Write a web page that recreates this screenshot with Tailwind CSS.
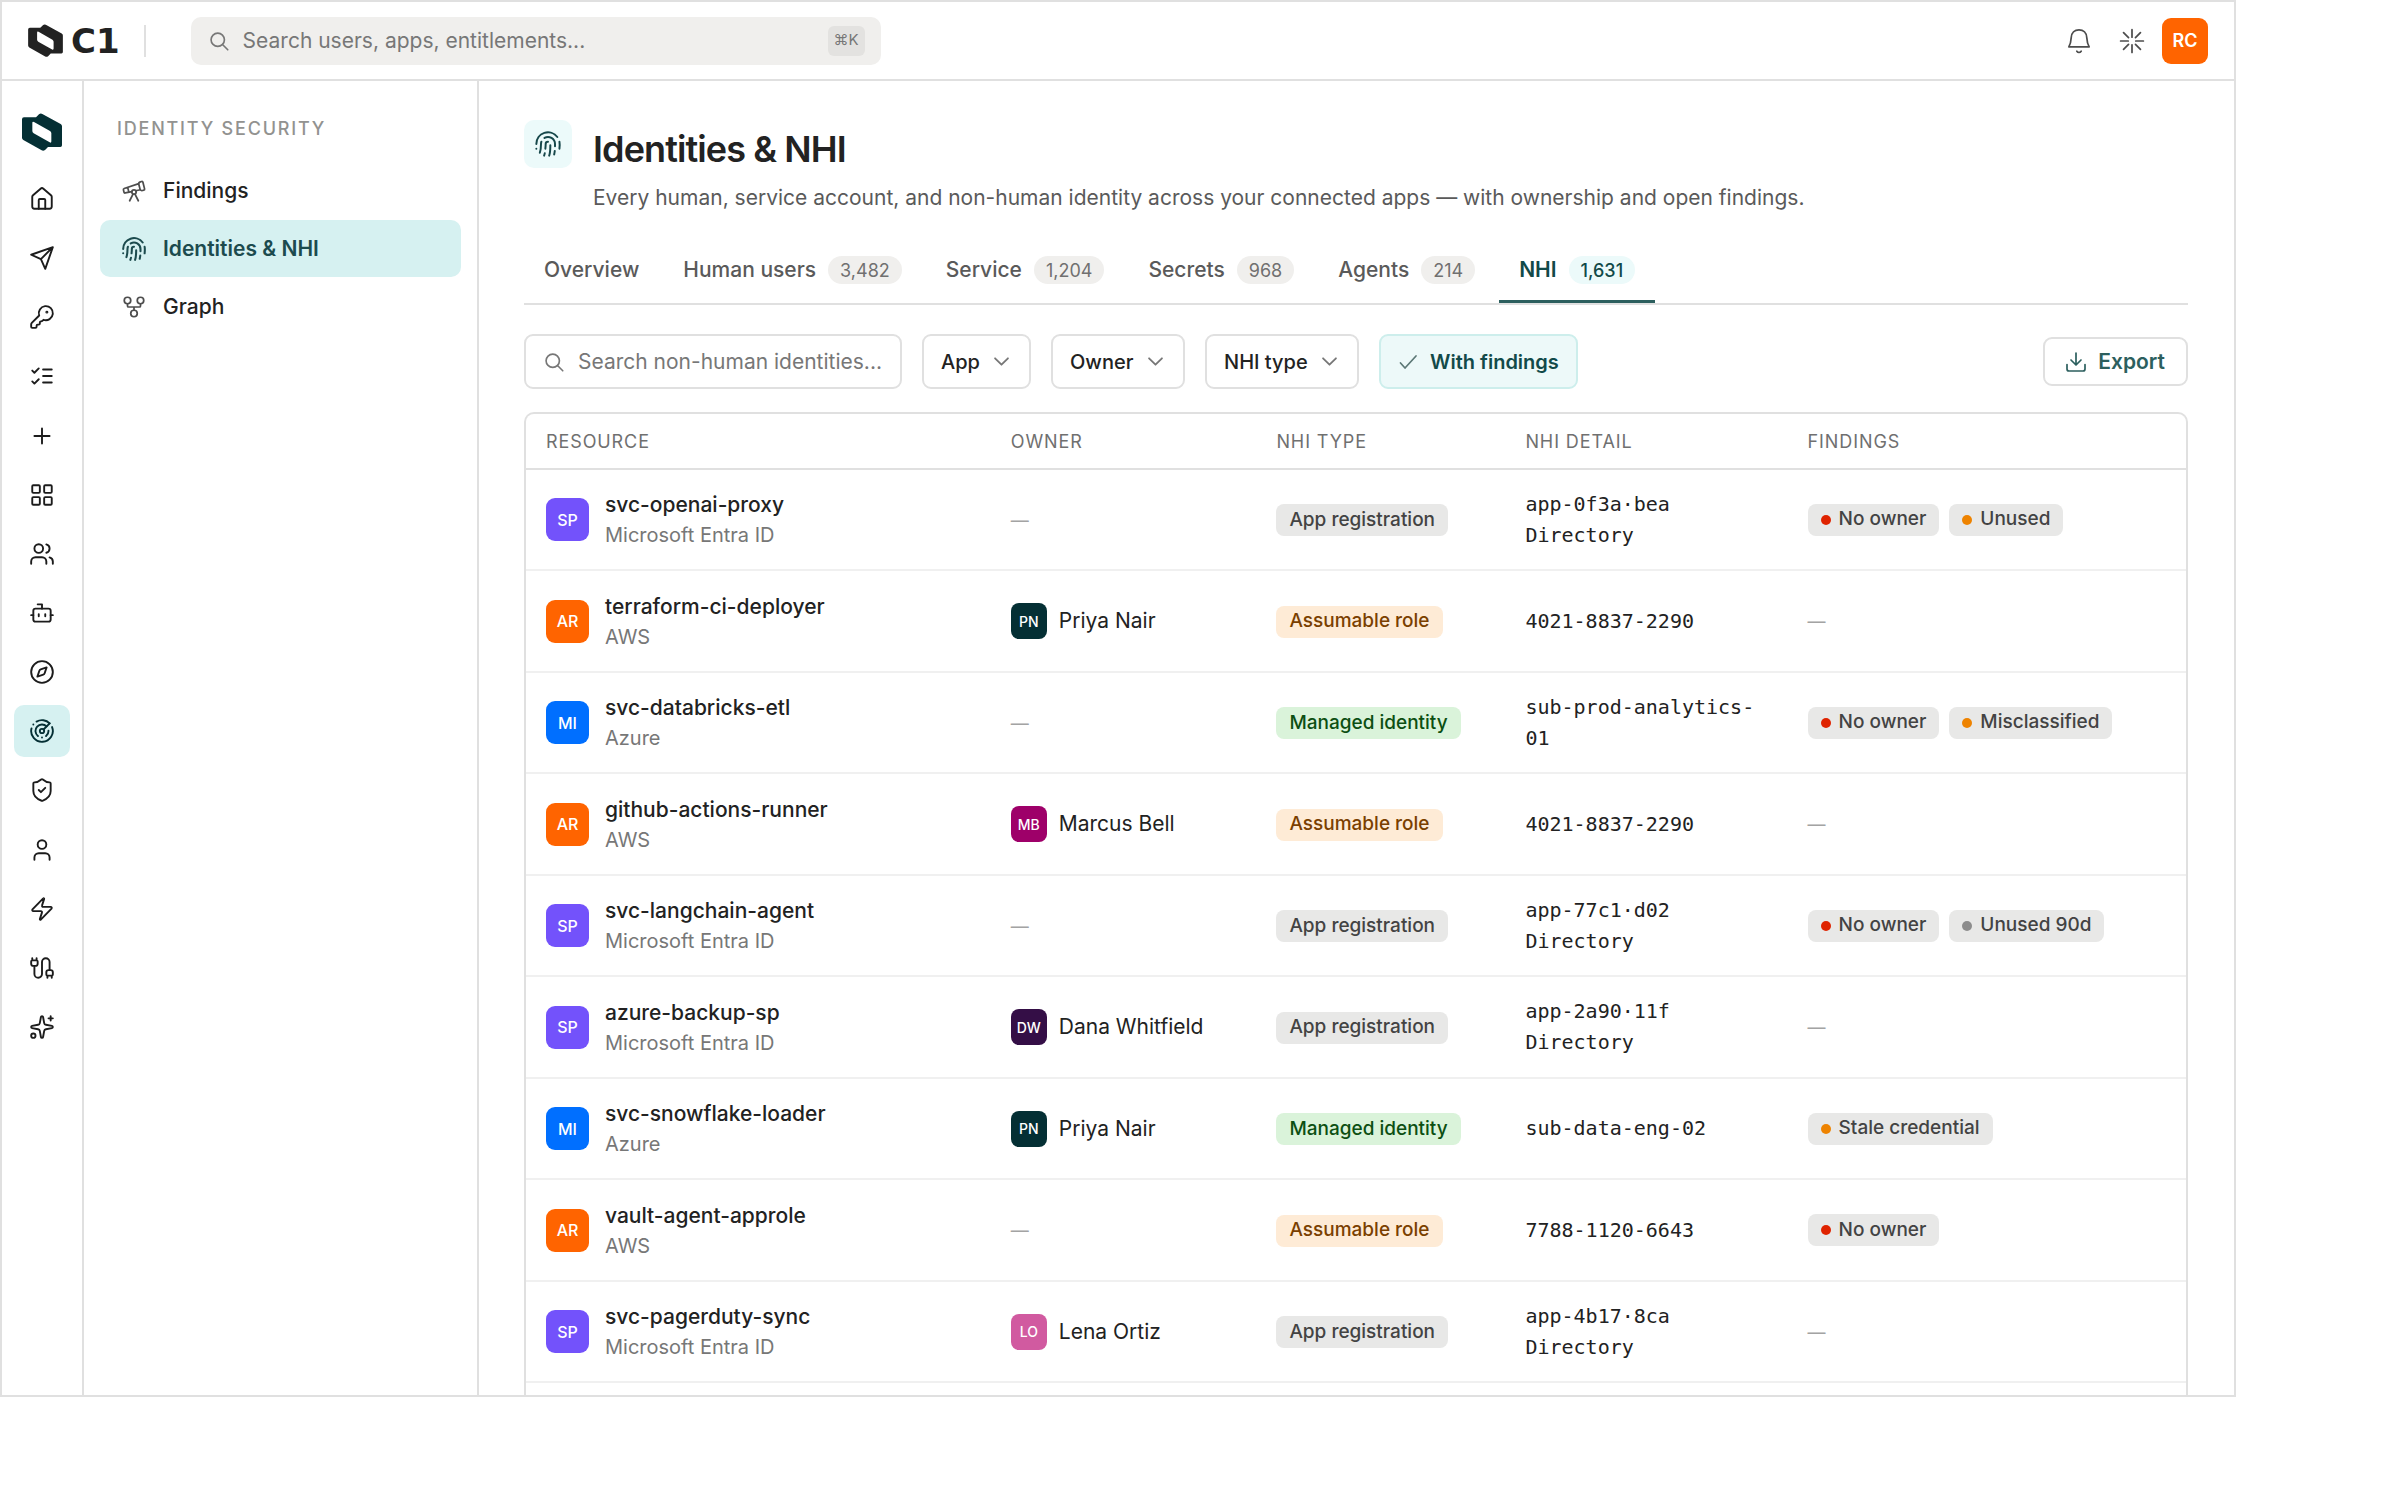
<!DOCTYPE html>
<html lang="en">
  <head>
    <meta charset="UTF-8" />
    <meta name="viewport" content="width=device-width, initial-scale=1.0" />
    <title>Identities &amp; NHI</title>
    <script src="https://cdn.jsdelivr.net/npm/@tailwindcss/browser@4"></script>
  </head>
  <body class="h-screen bg-white pr-[164px] pb-[115px] font-['Inter',sans-serif] text-[21px] text-[#222222]">

    <!-- shared shapes -->
    <svg class="hidden">
      <symbol id="mark" viewBox="0 0 120 114">
        <path fill="currentColor" fill-rule="evenodd" d="M0 19Q0 13 6 13H42L51 4Q56 0 61 3L116 33Q120 35 120 40V97Q120 102 115 102H78L69 111Q64 115 59 112L4 81Q0 78 0 74ZM31 30Q31 24 36 27L84 54Q88 57 88 61V85Q88 91 83 88L35 61Q31 58 31 54Z" />
      </symbol>
      <symbol id="fingerprint" viewBox="0 0 24 24">
        <path d="M12 10a2 2 0 0 0-2 2c0 1.02-.1 2.51-.26 4M14 13.12c0 2.38 0 6.38-1 8.88M17.29 21.02c.12-.6.43-2.3.5-3.02M2 12a10 10 0 0 1 18-6M2 16h.01M21.8 16c.2-2 .131-5.354 0-6M5 19.5C5.5 18 6 15 6 12a6 6 0 0 1 .34-2M8.65 22c.21-.66.45-1.32.57-2M9 6.8a6 6 0 0 1 9 5.2v2" />
      </symbol>
      <symbol id="search" viewBox="0 0 24 24">
        <circle cx="10.5" cy="10.5" r="8" /><path d="m16.5 16.5 6 6" />
      </symbol>
      <symbol id="chevron" viewBox="0 0 14 14">
        <path d="m1 4 6 6 6-6" />
      </symbol>
    </svg>

    <div class="flex h-full flex-col overflow-hidden border-2 border-[#e0e0e0]">

      <!-- TOP BAR -->
      <header class="flex h-[79px] shrink-0 items-center border-b-2 border-[#e0e0e0] pr-[26px] pl-[26px]">
        <a href="#" aria-label="C1 home" class="flex items-center gap-2 text-[#222222]">
          <svg class="h-[33px] w-[35px]"><use href="#mark" /></svg>
          <span class="font-['DejaVu_Sans',sans-serif] text-[34px] leading-[34px] font-bold">C1</span>
        </a>
        <span class="ml-6 h-8 w-0.5 bg-[#e0e0e0]"></span>
        <label class="ml-[45px] flex h-12 w-[690px] items-center rounded-[10px] bg-[#f0efed] pr-4 pl-[18px]">
          <svg class="size-5 shrink-0 text-[#777777]" fill="none" stroke="currentColor" stroke-width="2" stroke-linecap="round"><use href="#search" /></svg>
          <input type="text" aria-label="Search" placeholder="Search users, apps, entitlements..." class="ml-[14px] min-w-0 flex-1 outline-none placeholder:text-[#777777]" />
          <kbd class="flex h-[30px] items-center rounded-md bg-[#e3e2e0] px-[6px] font-['Inter',sans-serif] text-[15px] text-[#777777]">⌘K</kbd>
        </label>
        <div class="ml-auto flex items-center">
          <button aria-label="Notifications" class="flex size-[53px] items-center justify-center text-[#4d4d4d]">
            <svg class="size-[26px]" viewBox="0 0 24 24" fill="none" stroke="currentColor" stroke-width="1.6" stroke-linecap="round" stroke-linejoin="round">
              <path d="M2.6 17.4h18.8c-1.6-2.6-2-4.6-2.2-8.4C19 4.4 16 1.8 12 1.8S5 4.4 4.8 9c-.2 3.8-.6 5.8-2.2 8.4ZM10 21.4c.6.9 1.3 1.2 2 1.2s1.400-.3 2-1.2" />
            </svg>
          </button>
          <button aria-label="Assistant" class="flex size-[53px] items-center justify-center text-[#4d4d4d]">
            <svg class="size-[26px]" viewBox="0 0 24 24" fill="none" stroke="currentColor" stroke-width="1.6" stroke-linecap="round">
              <path d="M12 1.5v7M12 15.5v7M1.5 12h7M15.5 12h7M4.2 4.2l4.6 4.6M15.2 15.2l4.6 4.6M4.2 19.8l4.6-4.6M15.2 8.8l4.6-4.6" />
            </svg>
          </button>
          <button aria-label="Account" class="ml-1 flex size-[46px] items-center justify-center rounded-[9px] bg-[#ff6400] text-[18px] font-semibold text-white">RC</button>
        </div>
      </header>

      <div class="flex min-h-0 flex-1">

        <!-- ICON RAIL -->
        <nav aria-label="Main" class="flex w-[82px] shrink-0 flex-col items-center border-r-2 border-[#e0e0e0] pt-8 text-[#1c1c1c]">
          <svg class="h-[38px] w-10 shrink-0 text-[#042f34]"><use href="#mark" /></svg>
          <div id="rail" class="mt-[22px] flex h-[880px] shrink-0 flex-col justify-between"></div>
        </nav>

        <!-- SECTION MENU -->
        <nav aria-label="Identity security" class="w-[395px] shrink-0 border-r-2 border-[#e0e0e0] pt-[33px] pr-4 pl-4">
          <h2 class="pl-[17px] text-[18px] leading-[30px] font-medium tracking-widest text-[#929290] uppercase">Identity Security</h2>
          <div class="mt-[18px] flex flex-col gap-px font-medium">
            <a href="#" class="flex h-[57px] items-center gap-4 rounded-[10px] px-[21px]">
              <svg class="size-[26px] text-[#4d4d4d]" viewBox="0 0 24 24" fill="none" stroke="currentColor" stroke-width="1.6" stroke-linecap="round" stroke-linejoin="round">
                <path d="m10.065 12.493-6.18 1.318a.934.934 0 0 1-1.108-.702l-.537-2.15a1.07 1.07 0 0 1 .691-1.265l13.504-4.44M13.56 11.747l4.332-.924M16 21l-3.105-6.21M16.485 5.94a2 2 0 0 1 1.455-2.425l1.09-.272a1 1 0 0 1 1.212.727l1.515 6.06a1 1 0 0 1-.727 1.213l-1.09.272a2 2 0 0 1-2.425-1.455zM6.158 8.633l1.114 4.456M8 21l3.105-6.21" />
                <circle cx="12" cy="13" r="2" />
              </svg>
              Findings
            </a>
            <a href="#" aria-current="page" class="flex h-[57px] items-center gap-4 rounded-[10px] bg-[#d6f1f1] px-[21px] font-semibold text-[#1c4b4e]">
              <svg class="size-[26px]" fill="none" stroke="currentColor" stroke-width="1.9" stroke-linecap="round" stroke-linejoin="round"><use href="#fingerprint" /></svg>
              Identities &amp; NHI
            </a>
            <a href="#" class="flex h-[57px] items-center gap-4 rounded-[10px] px-[21px]">
              <svg class="size-[26px] text-[#4d4d4d]" viewBox="0 0 24 24" fill="none" stroke="currentColor" stroke-width="1.6" stroke-linecap="round" stroke-linejoin="round">
                <circle cx="12" cy="18" r="3" /><circle cx="6" cy="6" r="3" /><circle cx="18" cy="6" r="3" />
                <path d="M18 9v2c0 .6-.4 1-1 1H7c-.6 0-1-.4-1-1V9M12 12v3" />
              </svg>
              Graph
            </a>
          </div>
        </nav>

        <!-- CONTENT -->
        <main class="flex min-w-0 flex-1 flex-col overflow-hidden pt-[39px] pr-[46px] pl-[45px]">
          <div class="flex gap-[21px]">
            <span class="flex size-12 shrink-0 items-center justify-center rounded-[10px] bg-[#ecfafa] text-[#16474a]">
              <svg class="size-7" fill="none" stroke="currentColor" stroke-width="1.7" stroke-linecap="round" stroke-linejoin="round"><use href="#fingerprint" /></svg>
            </span>
            <div>
              <h1 class="text-[36px] leading-[58px] font-semibold tracking-tight">Identities &amp; NHI</h1>
              <p class="leading-[40px] text-[#5a5a5a]">Every human, service account, and non-human identity across your connected apps — with ownership and open findings.</p>
            </div>
          </div>

          <!-- tabs -->
          <div id="tabs" role="tablist" class="mt-[19px] flex h-[68px] shrink-0 gap-1 border-b-2 border-[#e0e0e0]"></div>

          <!-- filters -->
          <div class="mt-[29px] flex shrink-0 items-center gap-5">
            <label class="flex h-[55px] w-[378px] items-center rounded-[9px] border-2 border-[#e0e0e0] pr-2 pl-[18px]">
              <svg class="size-5 shrink-0 text-[#777777]" fill="none" stroke="currentColor" stroke-width="2" stroke-linecap="round"><use href="#search" /></svg>
              <input type="text" aria-label="Search non-human identities" placeholder="Search non-human identities..." class="ml-[14px] min-w-0 flex-1 outline-none placeholder:text-[#777777]" />
            </label>
            <div class="relative">
              <select aria-label="App" class="block h-[55px] appearance-none rounded-[9px] border-2 border-[#e0e0e0] pr-[49px] pl-[17px] text-[20px] font-medium"><option>App</option></select>
              <svg class="pointer-events-none absolute top-5 right-[22px] size-[15px] text-[#777777]" fill="none" stroke="currentColor" stroke-width="1.7" stroke-linecap="round" stroke-linejoin="round"><use href="#chevron" /></svg>
            </div>
            <div class="relative">
              <select aria-label="Owner" class="block h-[55px] appearance-none rounded-[9px] border-2 border-[#e0e0e0] pr-[49px] pl-[17px] text-[20px] font-medium"><option>Owner</option></select>
              <svg class="pointer-events-none absolute top-5 right-[22px] size-[15px] text-[#777777]" fill="none" stroke="currentColor" stroke-width="1.7" stroke-linecap="round" stroke-linejoin="round"><use href="#chevron" /></svg>
            </div>
            <div class="relative">
              <select aria-label="NHI type" class="block h-[55px] appearance-none rounded-[9px] border-2 border-[#e0e0e0] pr-[49px] pl-[17px] text-[20px] font-medium"><option>NHI type</option></select>
              <svg class="pointer-events-none absolute top-5 right-[22px] size-[15px] text-[#777777]" fill="none" stroke="currentColor" stroke-width="1.7" stroke-linecap="round" stroke-linejoin="round"><use href="#chevron" /></svg>
            </div>
            <button aria-pressed="true" class="flex h-[55px] items-center gap-3 rounded-[9px] border-2 border-[#cdeeec] bg-[#edf9f9] px-[17px] text-[20px] font-semibold text-[#124a49]">
              <svg class="size-5 text-[#5c7876]" viewBox="0 0 20 20" fill="none" stroke="currentColor" stroke-width="1.7" stroke-linecap="round" stroke-linejoin="round"><path d="m2.5 11 4.5 5L18 4" /></svg>
              With findings
            </button>
            <button class="ml-auto flex h-[49px] items-center gap-3 rounded-[9px] border-2 border-[#e0e0e0] px-[21px] font-semibold text-[#2c5f5e]">
              <svg class="size-5" viewBox="0 0 20 20" fill="none" stroke="currentColor" stroke-width="1.7" stroke-linecap="round" stroke-linejoin="round"><path d="M10 1v11.5M5 8l5 5 5-5M1 12.5V17a2 2 0 0 0 2 2h14a2 2 0 0 0 2-2v-4.5" /></svg>
              Export
            </button>
          </div>

          <!-- table -->
          <div class="mt-[23px] flex-1 rounded-t-[10px] border-2 border-b-0 border-[#e0e0e0]">
            <table class="w-full table-fixed border-separate border-spacing-0 text-left">
              <thead class="text-[18px] tracking-wider text-[#707070] uppercase">
                <tr class="h-14">
                  <th class="w-[28%] border-b-2 border-[#e0e0e0] px-5 font-normal">Resource</th>
                  <th class="w-[16%] border-b-2 border-[#e0e0e0] px-5 font-normal">Owner</th>
                  <th class="w-[15%] border-b-2 border-[#e0e0e0] px-5 font-normal">NHI type</th>
                  <th class="w-[17%] border-b-2 border-[#e0e0e0] px-5 font-normal">NHI detail</th>
                  <th class="w-[24%] border-b-2 border-[#e0e0e0] px-5 font-normal">Findings</th>
                </tr>
              </thead>
              <tbody id="rows"></tbody>
            </table>
          </div>
        </main>
      </div>
    </div>

    <script>
      /* ---------- rail ---------- */
      const railIcons = [
        ['Home', '<path d="M15 21v-8a1 1 0 0 0-1-1h-4a1 1 0 0 0-1 1v8"/><path d="M3 10a2 2 0 0 1 .709-1.528l7-5.999a2 2 0 0 1 2.582 0l7 5.999A2 2 0 0 1 21 10v9a2 2 0 0 1-2 2H5a2 2 0 0 1-2-2z"/>'],
        ['Requests', '<path d="m22 2-7 20-4-9-9-4ZM22 2 11 13"/>'],
        ['Access', '<path d="M2.586 17.414A2 2 0 0 0 2 18.828V21a1 1 0 0 0 1 1h3a1 1 0 0 0 1-1v-1a1 1 0 0 1 1-1h1a1 1 0 0 0 1-1v-1a1 1 0 0 1 1-1h.172a2 2 0 0 0 1.414-.586l.814-.814a6.5 6.5 0 1 0-4-4z"/><circle cx="16.5" cy="7.5" r=".5" fill="currentColor"/>'],
        ['Reviews', '<path d="m3 17 2 2 4-4M3 7l2 2 4-4M13 6h8M13 12h8M13 18h8"/>'],
        ['Create', '<path d="M5 12h14M12 5v14"/>'],
        ['Apps', '<rect width="7" height="7" x="3" y="3" rx="1"/><rect width="7" height="7" x="14" y="3" rx="1"/><rect width="7" height="7" x="14" y="14" rx="1"/><rect width="7" height="7" x="3" y="14" rx="1"/>'],
        ['Users', '<path d="M16 21v-2a4 4 0 0 0-4-4H6a4 4 0 0 0-4 4v2M22 21v-2a4 4 0 0 0-3-3.87M16 3.13a4 4 0 0 1 0 7.75"/><circle cx="9" cy="7" r="4"/>'],
        ['Agents', '<path d="M12 8V4H8M2 14h2M20 14h2M15 13v2M9 13v2"/><rect width="16" height="12" x="4" y="8" rx="2"/>'],
        ['Explore', '<path d="m16.24 7.76-1.804 5.411a2 2 0 0 1-1.265 1.265L7.76 16.24l1.804-5.411a2 2 0 0 1 1.265-1.265z"/><circle cx="12" cy="12" r="10"/>'],
        ['Identity security', '<path d="M19.07 4.93A10 10 0 0 0 6.99 3.34M4 6h.01M2.29 9.62A10 10 0 1 0 21.31 8.35M16.24 7.76A6 6 0 1 0 8.23 16.67M12 18h.01M17.99 11.66A6 6 0 0 1 15.77 16.67"/><circle cx="12" cy="12" r="2"/><path d="m13.41 10.59 5.66-5.66"/>'],
        ['Policies', '<path d="M20 13c0 5-3.5 7.5-7.66 8.95a1 1 0 0 1-.67-.01C7.5 20.5 4 18 4 13V6a1 1 0 0 1 1-1c2 0 4.5-1.2 6.24-2.72a1.17 1.17 0 0 1 1.52 0C14.51 3.81 17 5 19 5a1 1 0 0 1 1 1z"/><path d="m9 12 2 2 4-4"/>'],
        ['Profile', '<path d="M19 21v-2a4 4 0 0 0-4-4H9a4 4 0 0 0-4 4v2"/><circle cx="12" cy="7" r="4"/>'],
        ['Automations', '<path d="M4 14a1 1 0 0 1-.78-1.63l9.9-10.2a.5.5 0 0 1 .86.46l-1.92 6.02A1 1 0 0 0 13 10h7a1 1 0 0 1 .78 1.63l-9.9 10.2a.5.5 0 0 1-.86-.46l1.92-6.02A1 1 0 0 0 11 14z"/>'],
        ['Connectors', '<path d="M17 19a1 1 0 0 1-1-1v-2a2 2 0 0 1 2-2h2a2 2 0 0 1 2 2v2a1 1 0 0 1-1 1zM17 21v-2M19 14V6.5a1 1 0 0 0-7 0v11a1 1 0 0 1-7 0V10M21 21v-2M3 5V3M4 10a2 2 0 0 1-2-2V6a1 1 0 0 1 1-1h4a1 1 0 0 1 1 1v2a2 2 0 0 1-2 2zM7 5V3"/>'],
        ['Copilot', '<path d="M11.017 2.814a1 1 0 0 1 1.966 0l1.051 5.558a2 2 0 0 0 1.594 1.594l5.558 1.051a1 1 0 0 1 0 1.966l-5.558 1.051a2 2 0 0 0-1.594 1.594l-1.051 5.558a1 1 0 0 1-1.966 0l-1.051-5.558a2 2 0 0 0-1.594-1.594l-5.558-1.051a1 1 0 0 1 0-1.966l5.558-1.051a2 2 0 0 0 1.594-1.594zM20 2v4M22 4h-4"/><circle cx="4" cy="20" r="2"/>'],
      ];
      document.getElementById('rail').innerHTML = railIcons.map(([name, shape]) => `
        <a href="#" aria-label="${name}" class="flex h-[52px] w-14 items-center justify-center rounded-[10px] ${name === 'Identity security' ? 'bg-[#d6f1f1] text-[#042f34]' : ''}">
          <svg class="size-[26px]" viewBox="0 0 24 24" fill="none" stroke="currentColor" stroke-width="1.75" stroke-linecap="round" stroke-linejoin="round">${shape}</svg>
        </a>`).join('');

      /* ---------- tabs ---------- */
      const tabs = [['Overview', ''], ['Human users', '3,482'], ['Service', '1,204'], ['Secrets', '968'], ['Agents', '214'], ['NHI', '1,631']];
      document.getElementById('tabs').innerHTML = tabs.map(([name, count]) => {
        const on = name === 'NHI';
        return `
        <button role="tab" aria-selected="${on}" class="flex items-center gap-3 px-5 ${on ? 'font-semibold text-[#124a49] shadow-[inset_0_-3px_0_#2c5f5e]' : 'font-medium text-[#5a5a5a]'}">
          ${name}
          ${count ? `<span class="flex h-7 items-center rounded-full px-3 text-[18px] ${on ? 'bg-[#ecfafa] font-medium text-[#124a49]' : 'bg-[#f0efed] font-normal text-[#707070]'}">${count}</span>` : ''}
        </button>`;
      }).join('');

      /* ---------- table rows ---------- */
      const kinds = {
        SP: ['bg-[#7352fb]', 'Microsoft Entra ID', 'App registration', 'bg-[#e8e8e7] text-[#434343]'],
        AR: ['bg-[#ff6400]', 'AWS', 'Assumable role', 'bg-[#feebd6] text-[#7a3f00]'],
        MI: ['bg-[#006fff]', 'Azure', 'Managed identity', 'bg-[#daf3da] text-[#0c4f12]'],
      };
      const owners = {
        PN: ['bg-[#042f34]', 'Priya Nair'],
        MB: ['bg-[#9e0069]', 'Marcus Bell'],
        DW: ['bg-[#340e46]', 'Dana Whitfield'],
        LO: ['bg-[#d15aa0]', 'Lena Ortiz'],
      };
      const dots = {
        'No owner': 'bg-[#df2300]',
        'Unused': 'bg-[#ee8300]',
        'Misclassified': 'bg-[#ee8300]',
        'Stale credential': 'bg-[#ee8300]',
        'Unused 90d': 'bg-[#8c8c8c]',
      };
      const rows = [
        ['SP', 'svc-openai-proxy', '', 'app-0f3a·bea Directory', ['No owner', 'Unused']],
        ['AR', 'terraform-ci-deployer', 'PN', '4021-8837-2290', []],
        ['MI', 'svc-databricks-etl', '', 'sub-prod-analytics-01', ['No owner', 'Misclassified']],
        ['AR', 'github-actions-runner', 'MB', '4021-8837-2290', []],
        ['SP', 'svc-langchain-agent', '', 'app-77c1·d02 Directory', ['No owner', 'Unused 90d']],
        ['SP', 'azure-backup-sp', 'DW', 'app-2a90·11f Directory', []],
        ['MI', 'svc-snowflake-loader', 'PN', 'sub-data-eng-02', ['Stale credential']],
        ['AR', 'vault-agent-approle', '', '7788-1120-6643', ['No owner']],
        ['SP', 'svc-pagerduty-sync', 'LO', 'app-4b17·8ca Directory', []],
      ];
      const dash = '<span class="text-[18px] text-[#a3a3a3]">—</span>';

      document.getElementById('rows').innerHTML = rows.map(([kind, name, owner, detail, findings]) => {
        const [tile, source, type, badge] = kinds[kind];
        return `
        <tr class="odd:h-[101px] even:h-[102px]">
          <td class="border-b-2 border-[#f0f0f0] px-5">
            <div class="flex items-center gap-4">
              <span class="flex size-[43px] items-center justify-center rounded-[9px] text-[16px] font-medium text-white ${tile}">${kind}</span>
              <div class="pt-px">
                <div class="leading-[31px] font-medium">${name}</div>
                <div class="text-[20px] leading-[31px] text-[#777777]">${source}</div>
              </div>
            </div>
          </td>
          <td class="border-b-2 border-[#f0f0f0] px-5">
            ${owner ? `<div class="flex items-center gap-3">
              <span class="flex size-9 items-center justify-center rounded-lg text-[14px] font-medium text-white ${owners[owner][0]}">${owner}</span>
              ${owners[owner][1]}
            </div>` : dash}
          </td>
          <td class="border-b-2 border-[#f0f0f0] px-5">
            <span class="inline-flex h-8 items-center rounded-lg px-[13px] text-[19px] font-medium whitespace-nowrap ${badge}">${type}</span>
          </td>
          <td class="border-b-2 border-[#f0f0f0] px-5 font-['DejaVu_Sans_Mono',monospace] text-[20px] leading-[31px]">${detail}</td>
          <td class="border-b-2 border-[#f0f0f0] px-5">
            ${findings.length ? `<div class="flex gap-[10px]">${findings.map(f => `
              <span class="flex h-8 items-center gap-2 rounded-lg bg-[#e8e8e7] px-[13px] text-[19px] font-medium whitespace-nowrap text-[#434343]">
                <span class="size-[10px] rounded-full ${dots[f]}"></span>${f}
              </span>`).join('')}</div>` : dash}
          </td>
        </tr>`;
      }).join('');
    </script>
  </body>
</html>
